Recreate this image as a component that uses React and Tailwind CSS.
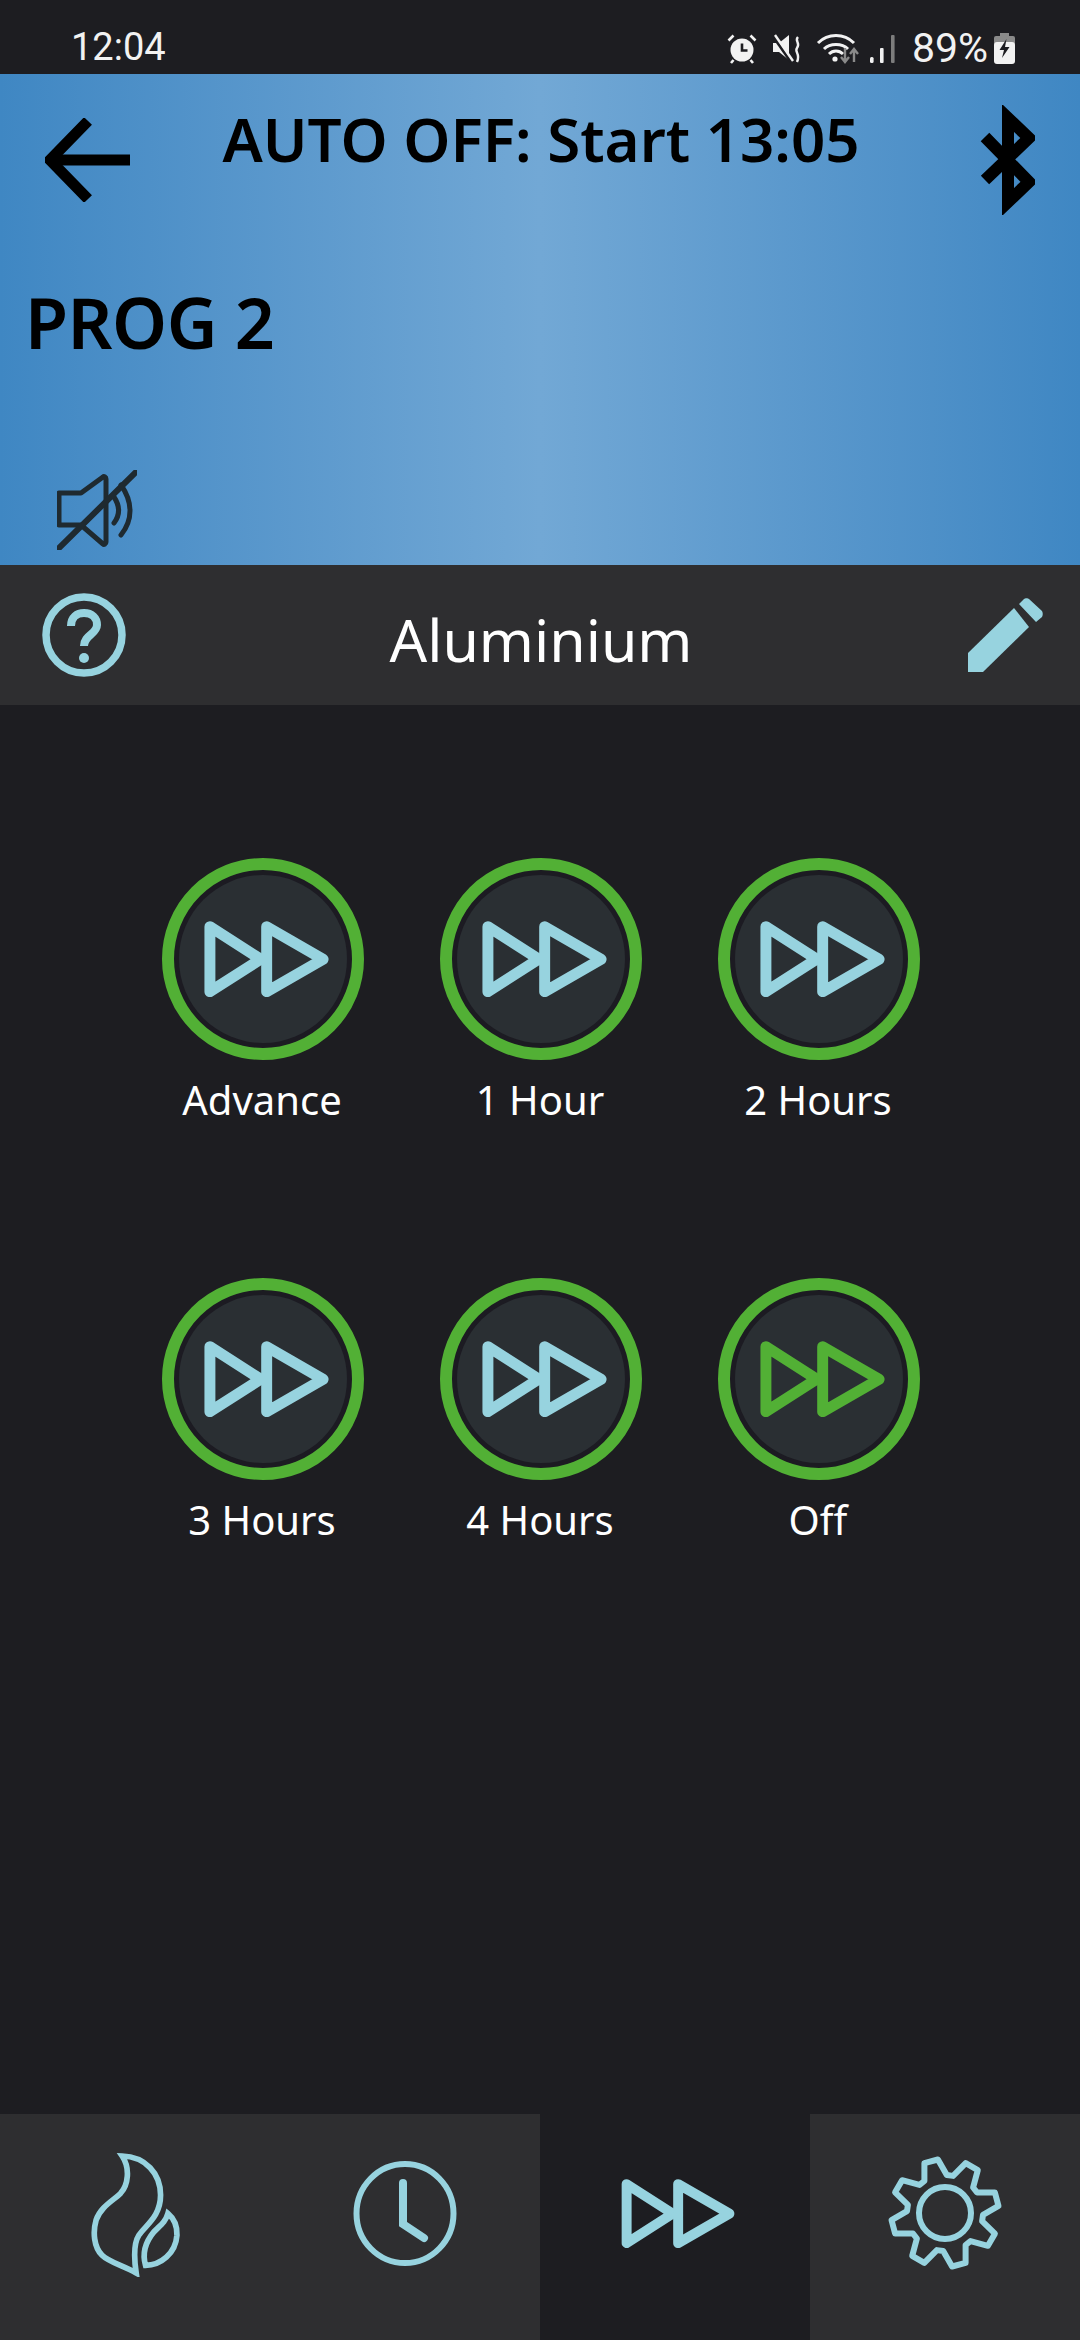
import React from 'react';

const font = "font-['Noto_Sans','Open_Sans',sans-serif]";
const ICE = '#97d3df';
const GREEN = '#52b035';

// builds the 8 tooth outline for the settings cog
function gearPath(cx, cy) {
  const pts = [];
  const rim = 38;
  const tip = 54;
  for (let i = 0; i < 8; i++) {
    const a = ((-15 + i * 45 - 90) * Math.PI) / 180;
    const at = (r, d) => [cx + r * Math.cos(a + d), cy + r * Math.sin(a + d)];
    pts.push(at(rim, -0.31), at(tip, -0.13), at(tip, 0.13), at(rim, 0.31));
  }
  return 'M' + pts.map((p) => p[0].toFixed(1) + ' ' + p[1].toFixed(1)).join('L') + 'Z';
}

function FastForward({ color = ICE, className }) {
  return (
    <svg viewBox="190 243 375 229" className={className} fill="none" stroke={color} strokeWidth="33" strokeLinejoin="round">
      <path d="M207 260L360 358L207 456Z" />
      <path d="M378 260L548 358L378 456Z" />
    </svg>
  );
}

function StatusIcons() {
  return (
    <div className="flex items-center">
      <svg viewBox="0 0 30 30" className="w-[30px] h-[30px] mr-[15px]">
        <circle cx="15" cy="16" r="11.5" fill="#f2f2f2" />
        <path d="M15 9.5V16.5H20.5" fill="none" stroke="#1d1d21" strokeWidth="2.6" />
        <path d="M1.5 6.5L6.5 1.5M28.5 6.5L23.5 1.5M6.5 26L4 29M23.5 26L26 29" stroke="#f2f2f2" strokeWidth="2.6" />
      </svg>
      <svg viewBox="0 0 30 30" className="w-[30px] h-[30px] mr-[14px]">
        <path d="M1 9H7L17 1V26L7 18H1Z" fill="#f2f2f2" />
        <path d="M1 2L19 28" stroke="#1d1d21" strokeWidth="3" />
        <path d="M3 1L21 27" stroke="#f2f2f2" strokeWidth="2.4" />
        <path d="M26 3C22 7 29 9 25 14C22 18 29 20 25 28" fill="none" stroke="#f2f2f2" strokeWidth="2.4" />
      </svg>
      <svg viewBox="0 0 44 30" className="w-[44px] h-[30px] mr-[10px]">
        <path d="M2 9C12 -1 28 -1 38 9" fill="none" stroke="#f2f2f2" strokeWidth="3" />
        <path d="M8 15C14 9 26 9 32 15" fill="none" stroke="#f2f2f2" strokeWidth="3" />
        <path d="M13 20C17 16 23 16 27 20" fill="none" stroke="#f2f2f2" strokeWidth="3" />
        <circle cx="19" cy="25" r="2.6" fill="#f2f2f2" />
        <path d="M29 14V27M25 23L29 28L33 23" fill="none" stroke="#8a8a8a" strokeWidth="2.4" />
        <path d="M38 28V16M34 20L38 15L42 20" fill="none" stroke="#8a8a8a" strokeWidth="2.4" />
      </svg>
      <svg viewBox="0 0 27 30" className="w-[27px] h-[30px] mr-[15px]">
        <rect x="0" y="23" width="3.6" height="6" rx="1.5" fill="#f2f2f2" />
        <rect x="10" y="14" width="3.6" height="15" rx="1" fill="#f2f2f2" />
        <rect x="21" y="1" width="3.6" height="28" rx="1" fill="#7d7d7d" />
      </svg>
      <span className="font-['Roboto',sans-serif] text-[41px] leading-none text-[#f2f2f2] mr-[6px]">89%</span>
      <svg viewBox="0 0 21 31" className="w-[21px] h-[31px]">
        <rect x="6" y="0" width="9" height="4" fill="#8a8a8a" />
        <rect x="0" y="3" width="21" height="9" rx="2" fill="#8a8a8a" />
        <rect x="0" y="9" width="21" height="22" rx="3" fill="#f2f2f2" />
        <path d="M12.5 6L5.5 17H10L8 25L15.5 14H11Z" fill="#1d1d21" />
      </svg>
    </div>
  );
}

function Header() {
  return (
    <div className={`h-[491px] bg-linear-to-r from-[#3f87c3] via-[#72a8d5] to-[#3f87c3] ${font} text-black`}>
      <div className="flex items-start pl-[45px] pr-[45px]">
        <svg viewBox="0 0 85 84" className="w-[85px] h-[84px] mt-[44px] shrink-0" fill="none" stroke="#000" strokeWidth="11">
          <path d="M85 42H6" />
          <path d="M43 3L5 42L43 81" />
        </svg>
        <h1 className="flex-1 text-center pr-[28px] mt-[24px] text-[60px] leading-[82px] font-semibold whitespace-nowrap">AUTO OFF: Start 13:05</h1>
        <svg viewBox="40 25 55 110" className="w-[55px] h-[110px] mt-[31px] shrink-0" fill="none" stroke="#000" strokeWidth="12" strokeLinejoin="miter">
          <path d="M45 57L89 102L68 122V38L89 58L45 100" />
        </svg>
      </div>
      <div className="pl-[25px] mt-[58px] text-[70px] leading-[98px] font-semibold tracking-[-0.5px]">PROG 2</div>
      <svg viewBox="0 0 80 80" className="w-[80px] h-[80px] ml-[57px] mt-[99px]" fill="none" stroke="#1f2a30" strokeWidth="5" strokeLinecap="round" strokeLinejoin="round">
        <path d="M2 23H24L46 7C47 6 49 7 49 9V72C49 74 47 75 46 74L24 55H2Z" />
        <path d="M57 27C63 36 63 45 57 53" />
        <path d="M64 15C76 32 76 50 64 65" />
        <path d="M2 78L79 2" strokeWidth="6" />
      </svg>
    </div>
  );
}

function Toolbar() {
  return (
    <div className="h-[140px] bg-[#2e2e30] flex items-center justify-between pl-[42px] pr-[37px]">
      <svg viewBox="0 0 84 84" className="w-[84px] h-[84px]" fill="none" stroke={ICE} strokeWidth="7.5">
        <circle cx="42" cy="42" r="38" />
        <path d="M29 33C29 24 35 20 42 20C50 20 55 25 55 32C55 41 42 42 42 53" strokeWidth="8" />
        <circle cx="42" cy="65" r="5" fill={ICE} stroke="none" />
      </svg>
      <span className={`${font} mt-[8px] mr-[12px] text-[59px] leading-none text-white`}>Aluminium</span>
      <svg viewBox="0 0 75 75" className="w-[75px] h-[75px]" fill={ICE}>
        <path d="M0 55L46 10L61 29L15 74H0Z" />
        <path d="M51 6L56 1C57 0 60 0 61 1L74 13C75 15 75 17 74 19L68 24Z" />
      </svg>
    </div>
  );
}

function SpeedButton({ label, color = ICE }) {
  return (
    <div className="flex flex-col items-center">
      <div className="w-[202px] h-[202px] rounded-full border-[12px] border-[#52b035] bg-[#1c1b22] p-[5px]">
        <div className="w-full h-full rounded-full bg-[#2a2f33] flex items-center justify-center pl-[6px]">
          <FastForward color={color} className="w-[125px] h-[76px]" />
        </div>
      </div>
      <span className={`${font} mt-[12px] mr-[2px] text-[40px] leading-[56px] text-white`}>{label}</span>
    </div>
  );
}

function BottomNav() {
  return (
    <div className="h-[226px] grid grid-cols-4">
      <div className="bg-[#2e2e30] flex items-center justify-center pb-[28px]">
        <svg viewBox="250 150 280 380" className="w-[97px] h-[127px]" fill="none" stroke={ICE} strokeWidth="17">
          <path d="M350 168C420 170 465 220 465 285C465 350 420 375 400 405C385 428 385 470 392 518C350 495 310 485 290 465C265 440 262 395 272 360C285 320 325 300 345 280C368 255 375 205 350 168Z" />
          <path d="M487 340C505 355 515 380 514 405C510 460 465 495 420 495C410 460 420 425 445 395C465 375 480 365 487 340Z" />
        </svg>
      </div>
      <div className="bg-[#2e2e30] flex items-center justify-center pb-[28px]">
        <svg viewBox="0 0 104 105" className="w-[104px] h-[105px]" fill="none" stroke={ICE} strokeWidth="6" strokeLinecap="round">
          <ellipse cx="52" cy="52.5" rx="48.5" ry="49.5" />
          <path d="M50 22V63L71 77" strokeWidth="8" />
        </svg>
      </div>
      <div className="flex items-center justify-center pb-[28px] pl-[6px]">
        <FastForward className="w-[114px] h-[69px]" />
      </div>
      <div className="bg-[#2e2e30] flex items-center justify-center pb-[28px]">
        <svg viewBox="0 0 120 120" className="w-[120px] h-[120px]" fill="none" stroke={ICE} strokeWidth="6" strokeLinejoin="round">
          <path d={gearPath(60, 60)} />
          <circle cx="60" cy="60" r="26" />
        </svg>
      </div>
    </div>
  );
}

export default function App() {
  return (
    <div className="w-[1080px] h-[2340px] flex flex-col bg-[#1d1d21] overflow-hidden">
      <div className="h-[74px] flex items-start justify-between pt-[28px] pl-[71px] pr-[65px]">
        <span className="font-['Roboto',sans-serif] text-[38px] leading-[38px] text-[#f2f2f2]">12:04</span>
        <StatusIcons />
      </div>
      <Header />
      <Toolbar />
      <main className="flex-1 pl-[124px] pr-[122px] pt-[153px]">
        <div className="grid grid-cols-3 gap-y-[150px]">
          <SpeedButton label="Advance" />
          <SpeedButton label="1 Hour" />
          <SpeedButton label="2 Hours" />
          <SpeedButton label="3 Hours" />
          <SpeedButton label="4 Hours" />
          <SpeedButton label="Off" color={GREEN} />
        </div>
      </main>
      <BottomNav />
    </div>
  );
}
